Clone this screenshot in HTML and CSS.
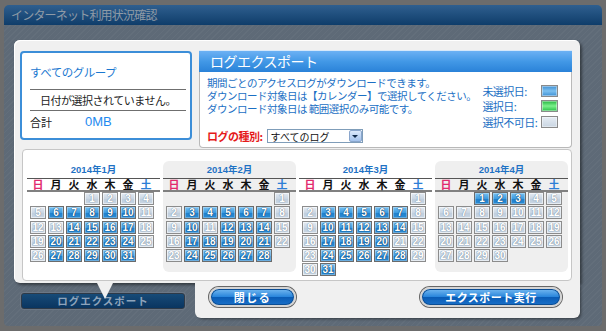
FILE: index.html
```html
<!DOCTYPE html>
<html lang="ja">

<head>
    <meta charset="UTF-8">
    <title>インターネット利用状況確認</title>
    <link rel="stylesheet" href="styles.css">
</head>

<body>
    <div class="window">
        <div class="titlebar">インターネット利用状況確認</div>
        <div class="window-body">
            <div class="dialog">
                <div class="dialog-main">
                    <div class="top-row">
                        <div class="summary">
                            <div class="summary-group">すべてのグループ</div>
                            <div class="summary-status">日付が選択されていません。</div>
                            <div class="summary-total">
                                <span class="total-label">合計</span>
                                <span class="total-value">0MB</span>
                            </div>
                        </div>

                        <div class="export-info">
                            <div class="export-head">ログエクスポート</div>
                            <div class="export-body">
                                <p class="notes">期間ごとのアクセスログがダウンロードできます。<br>ダウンロード対象日は【カレンダー】で選択してください。<br>ダウンロード対象日は 範囲選択のみ可能です。</p>
                                <ul class="legend">
                                    <li>未選択日:<span class="swatch swatch-open"></span></li>
                                    <li>選択日:<span class="swatch swatch-picked"></span></li>
                                    <li>選択不可日:<span class="swatch swatch-off"></span></li>
                                </ul>
                                <div class="log-type">
                                    <label>ログの種別:</label>
                                    <div class="select">
                                        <span>すべてのログ</span>
                                        <span class="select-arrow"></span>
                                    </div>
                                </div>
                            </div>
                        </div>
                    </div>

                    <div class="calendars">
                        <!-- January -->
                        <div class="cal">
                            <div class="cal-title">2014年1月</div>
                            <div class="weekdays"><span class="sun">日</span><span>月</span><span>火</span><span>水</span><span>木</span><span>金</span><span class="sat">土</span></div>
                            <div class="days">
                                <span class="day first-wed">1</span><span class="day">2</span><span class="day">3</span><span class="day">4</span>
                                <span class="day">5</span><span class="day open">6</span><span class="day open">7</span><span class="day open">8</span><span class="day open">9</span><span class="day open">10</span><span class="day">11</span>
                                <span class="day">12</span><span class="day">13</span><span class="day open">14</span><span class="day open">15</span><span class="day open">16</span><span class="day open">17</span><span class="day">18</span>
                                <span class="day">19</span><span class="day open">20</span><span class="day open">21</span><span class="day open">22</span><span class="day open">23</span><span class="day open">24</span><span class="day">25</span>
                                <span class="day">26</span><span class="day open">27</span><span class="day open">28</span><span class="day open">29</span><span class="day open">30</span><span class="day open">31</span>
                            </div>
                        </div>

                        <!-- February -->
                        <div class="cal cal-alt">
                            <div class="cal-title">2014年2月</div>
                            <div class="weekdays"><span class="sun">日</span><span>月</span><span>火</span><span>水</span><span>木</span><span>金</span><span class="sat">土</span></div>
                            <div class="days">
                                <span class="day first-sat">1</span>
                                <span class="day">2</span><span class="day open">3</span><span class="day open">4</span><span class="day open">5</span><span class="day open">6</span><span class="day open">7</span><span class="day">8</span>
                                <span class="day">9</span><span class="day open">10</span><span class="day">11</span><span class="day open">12</span><span class="day open">13</span><span class="day open">14</span><span class="day">15</span>
                                <span class="day">16</span><span class="day open">17</span><span class="day open">18</span><span class="day open">19</span><span class="day open">20</span><span class="day open">21</span><span class="day">22</span>
                                <span class="day">23</span><span class="day open">24</span><span class="day open">25</span><span class="day open">26</span><span class="day open">27</span><span class="day open">28</span>
                            </div>
                        </div>

                        <!-- March -->
                        <div class="cal">
                            <div class="cal-title">2014年3月</div>
                            <div class="weekdays"><span class="sun">日</span><span>月</span><span>火</span><span>水</span><span>木</span><span>金</span><span class="sat">土</span></div>
                            <div class="days">
                                <span class="day first-sat">1</span>
                                <span class="day">2</span><span class="day open">3</span><span class="day open">4</span><span class="day open">5</span><span class="day open">6</span><span class="day open">7</span><span class="day">8</span>
                                <span class="day">9</span><span class="day open">10</span><span class="day open">11</span><span class="day open">12</span><span class="day open">13</span><span class="day open">14</span><span class="day">15</span>
                                <span class="day">16</span><span class="day open">17</span><span class="day open">18</span><span class="day open">19</span><span class="day open">20</span><span class="day">21</span><span class="day">22</span>
                                <span class="day">23</span><span class="day open">24</span><span class="day open">25</span><span class="day open">26</span><span class="day open">27</span><span class="day open">28</span><span class="day">29</span>
                                <span class="day">30</span><span class="day open">31</span>
                            </div>
                        </div>

                        <!-- April -->
                        <div class="cal cal-alt">
                            <div class="cal-title">2014年4月</div>
                            <div class="weekdays"><span class="sun">日</span><span>月</span><span>火</span><span>水</span><span>木</span><span>金</span><span class="sat">土</span></div>
                            <div class="days">
                                <span class="day open first-tue">1</span><span class="day open">2</span><span class="day open">3</span><span class="day">4</span><span class="day">5</span>
                                <span class="day">6</span><span class="day">7</span><span class="day">8</span><span class="day">9</span><span class="day">10</span><span class="day">11</span><span class="day">12</span>
                                <span class="day">13</span><span class="day">14</span><span class="day">15</span><span class="day">16</span><span class="day">17</span><span class="day">18</span><span class="day">19</span>
                                <span class="day">20</span><span class="day">21</span><span class="day">22</span><span class="day">23</span><span class="day">24</span><span class="day">25</span><span class="day">26</span>
                                <span class="day">27</span><span class="day">28</span><span class="day">29</span><span class="day">30</span>
                            </div>
                        </div>
                    </div>
                </div>

                <div class="dialog-foot">
                    <div class="foot-left">
                        <div class="tab">ログエクスポート</div>
                    </div>
                    <div class="foot-right">
                        <button class="btn btn-close">閉じる</button>
                        <button class="btn btn-export">エクスポート実行</button>
                    </div>
                </div>
            </div>
        </div>
    </div>
</body>

</html>
```

FILE: styles.css
```css
* {
    box-sizing: border-box;
}

body {
    margin: 0;
    width: 606px;
    height: 331px;
    overflow: hidden;
    background-color: #6c6c6c;
    font-family: "Noto Sans CJK JP", sans-serif;
}

.window {
    margin: 5px 4px 0;
    height: 321px;
}

.titlebar {
    height: 20px;
    padding-left: 7px;
    background: linear-gradient(#2f5f8f, #0f3d6a);
    border-radius: 5px 5px 0 0;
    color: #8e9aa6;
    font-size: 12px;
    line-height: 20px;
    letter-spacing: -0.8px;
}

.window-body {
    height: 301px;
    padding: 15px 0 0 10px;
    background: repeating-linear-gradient(135deg, rgba(255, 255, 255, 0.03) 0 1px, transparent 1px 4px), #5e6a77;
    border-radius: 0 0 4px 4px;
}

.dialog {
    width: 566px;
}

.dialog-main {
    background-color: #f0f0f0;
    border-radius: 6px 6px 0 6px;
    padding: 10px 8px 2px 6px;
    box-shadow: inset 1px 1px 0 #fff, 2px 2px 3px rgba(0, 0, 0, 0.45);
}

.top-row {
    display: flex;
    gap: 7px;
    height: 98px;
}

/* left summary box */
.summary {
    width: 172px;
    height: 89px;
    margin-top: 1px;
    padding: 0 4px 0 8px;
    background-color: #fff;
    border: 2px solid #3c8ed8;
    border-radius: 4px;
}

.summary-group {
    height: 37px;
    padding-top: 12px;
    line-height: 14px;
    font-size: 11.5px;
    letter-spacing: -0.5px;
    color: #1a78d0;
    border-bottom: 1px solid #6f6f6f;
}

.summary-status {
    height: 21px;
    line-height: 20px;
    text-align: center;
    font-size: 11px;
    letter-spacing: -0.5px;
    color: #222;
    border-bottom: 1px solid #6f6f6f;
}

.summary-total {
    display: flex;
    padding-top: 3px;
    line-height: 16px;
}

.total-label {
    width: 55px;
    font-size: 11px;
    color: #222;
}

.total-value {
    font-family: "Liberation Sans", sans-serif;
    font-size: 13px;
    color: #1e8af0;
}

/* right export info */
.export-info {
    width: 373px;
    background-color: #fff;
    border: 1px solid #b9b9b9;
    border-top: none;
    border-radius: 0 0 4px 4px;
}

.export-head {
    height: 22px;
    margin: 0 -1px;
    padding-left: 11px;
    background: linear-gradient(#6cb1f4, #4298e6 50%, #2a82d8);
    border-top: 1px solid #d6e8fa;
    color: #fff;
    font-size: 14px;
    line-height: 21px;
    letter-spacing: -0.5px;
}

.export-body {
    display: grid;
    grid-template-columns: 1fr 76px;
    column-gap: 6px;
    padding: 4px 13px 0 7px;
}

.notes {
    margin: 0;
    font-size: 10.5px;
    line-height: 13px;
    letter-spacing: -0.5px;
    color: #1b6fc4;
    white-space: nowrap;
}

.legend {
    grid-column: 2;
    grid-row: 1 / span 2;
    list-style: none;
    margin: 7px 0 0;
    padding: 0;
}

.legend li {
    display: flex;
    justify-content: space-between;
    align-items: center;
    height: 15.5px;
    font-size: 11px;
    letter-spacing: -0.5px;
    color: #1b6fc4;
    white-space: nowrap;
}

.swatch {
    width: 17px;
    height: 12px;
    border: 1px solid #8a8a8a;
    box-shadow: inset 0 0 0 1px rgba(255, 255, 255, 0.4);
}

.swatch-open {
    background: linear-gradient(#3f8fd2, #7cc0f0 50%, #3d90d4);
}

.swatch-picked {
    background: linear-gradient(#22b43e, #7cf08c 50%, #26c044);
}

.swatch-off {
    background: linear-gradient(#e6edf4, #c9d5e2);
}

.log-type {
    grid-column: 1;
    display: flex;
    align-items: center;
    margin-top: 14px;
    height: 14px;
}

.log-type label {
    font-size: 11px;
    font-weight: bold;
    letter-spacing: -0.5px;
    color: #e51a1a;
    margin-right: 4px;
}

.select {
    display: flex;
    justify-content: space-between;
    align-items: center;
    width: 96px;
    height: 14px;
    padding-left: 3px;
    background-color: #fff;
    border: 1px solid #7f9db9;
    font-size: 10px;
    color: #111;
}

.select-arrow {
    display: flex;
    justify-content: center;
    align-items: center;
    width: 13px;
    height: 12px;
    background: linear-gradient(#dbe9fb, #a3c2ec);
    border: 1px solid #8aa6cc;
    border-radius: 2px;
}

.select-arrow::after {
    content: "";
    border-left: 3px solid transparent;
    border-right: 3px solid transparent;
    border-top: 3px solid #102a4a;
}

/* calendars */
.calendars {
    display: flex;
    align-items: flex-start;
    gap: 3px;
    height: 132px;
    margin: 1px 0 0 2px;
    padding: 11px 0 0 4px;
    background-color: #fff;
    border: 1px solid #c6c6c6;
    border-radius: 4px;
}

.cal {
    width: 133px;
    height: 111px;
    border-radius: 6px;
}

.cal-alt {
    background-color: #efefef;
}

.cal-title {
    height: 17px;
    line-height: 17px;
    text-align: center;
    font-family: "Liberation Sans", "Noto Sans CJK JP", sans-serif;
    font-size: 9.5px;
    font-weight: bold;
    color: #1f72c4;
}

.weekdays {
    display: grid;
    grid-template-columns: repeat(7, 16px);
    column-gap: 2px;
    height: 14px;
    padding-left: 3px;
    border-top: 1px solid #555;
    border-bottom: 2px solid #808080;
    font-size: 11px;
    font-weight: bold;
    line-height: 11px;
    color: #111;
}

.weekdays span {
    text-align: center;
}

.weekdays .sun {
    color: #e22a6e;
}

.weekdays .sat {
    color: #2d7ed6;
}

.days {
    display: grid;
    grid-template-columns: repeat(7, 16px);
    grid-auto-rows: 13px;
    gap: 1.3px 2px;
    padding-left: 3px;
}

.day {
    border: 1px solid #8c8c8c;
    background: linear-gradient(#e4ebf2, #cbd7e4 50%, #bfcedd 51%, #c9d6e3);
    box-shadow: inset 0 0 0 1px rgba(255, 255, 255, 0.55);
    color: #fff;
    font-family: "Liberation Sans", sans-serif;
    font-size: 10px;
    font-weight: bold;
    line-height: 11px;
    text-align: center;
    text-shadow: 0 0 1px #7f8fa0, 0 0 1px #7f8fa0;
}

.day.open {
    border-color: #6b6b6b;
    background: linear-gradient(#78c2f2, #3e9ce0 50%, #1f80cc 51%, #2a8bd3);
    box-shadow: inset 0 0 0 1px rgba(255, 255, 255, 0.3);
    text-shadow: 0 0 1px #0a3560, 0 0 1px #0a3560;
}

.first-tue {
    grid-column-start: 3;
}

.first-wed {
    grid-column-start: 4;
}

.first-sat {
    grid-column-start: 7;
}

/* footer */
.dialog-foot {
    display: flex;
    height: 35px;
}

.foot-left {
    position: relative;
    width: 181px;
    padding: 10px 0 0 7px;
}

.foot-left::before {
    content: "";
    position: absolute;
    left: 83px;
    top: 0;
    border-left: 8px solid transparent;
    border-right: 8px solid transparent;
    border-top: 16px solid #f0f0f0;
}

.tab {
    width: 164px;
    height: 16px;
    background: linear-gradient(#174b78, #0a3560);
    border: 1px solid #2e3a48;
    border-radius: 3px;
    box-shadow: 0 0 0 1px #6c7785;
    color: #8ea4bb;
    font-size: 10.5px;
    font-weight: bold;
    line-height: 14px;
    text-align: center;
    letter-spacing: 1px;
}

.foot-right {
    flex: 1;
    display: flex;
    justify-content: space-between;
    align-items: flex-start;
    padding: 4px 18px 0 14px;
    background-color: #f0f0f0;
    border-radius: 0 0 6px 6px;
    box-shadow: 2px 2px 3px -1px rgba(0, 0, 0, 0.45);
}

.btn {
    height: 20px;
    padding: 0;
    border: 2px solid #d4d4d4;
    border-radius: 10px;
    background: linear-gradient(#74b8f0, #2a86dc 48%, #0a5cb6 52%, #1a70c8);
    box-shadow: 0 0 0 1px #666, inset 0 0 0 1px #0b4d94;
    color: #fff;
    font-family: "Noto Sans CJK JP", sans-serif;
    font-size: 11px;
    font-weight: bold;
    line-height: 15px;
    cursor: pointer;
}

.btn-close {
    width: 87px;
    letter-spacing: 1.5px;
}

.btn-export {
    width: 142px;
    letter-spacing: 0.5px;
}
```
